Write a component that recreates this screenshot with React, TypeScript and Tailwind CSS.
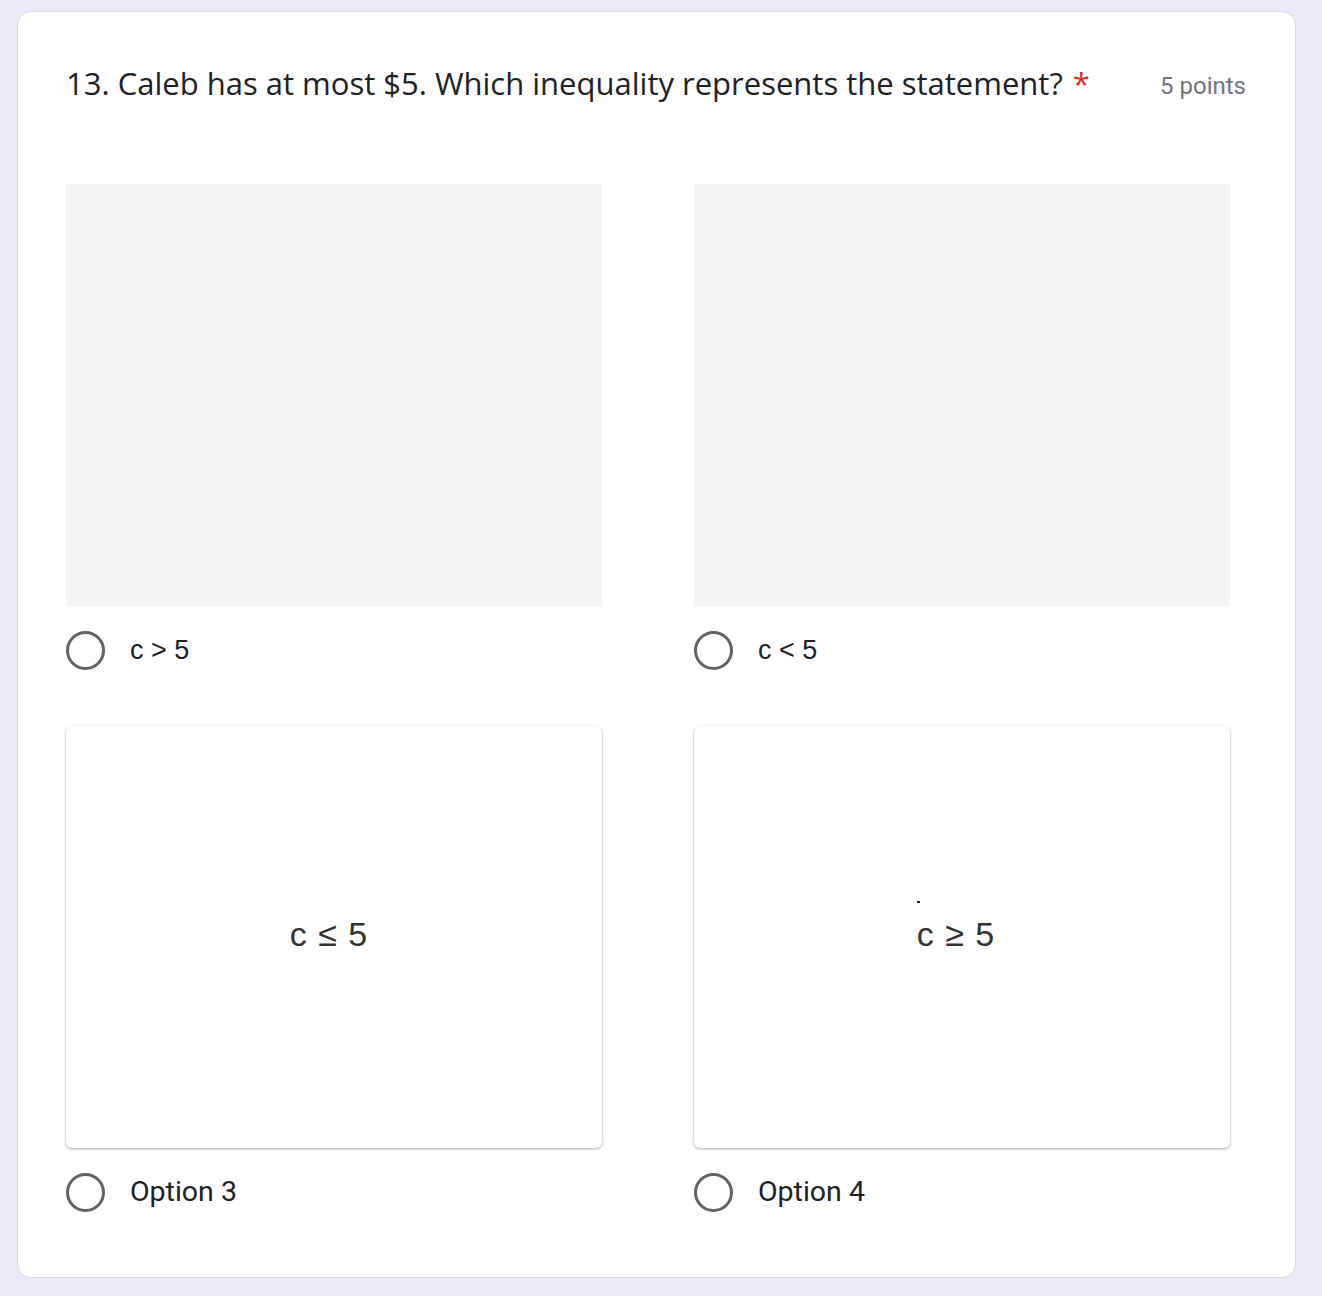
import React from "react";

function Radio() {
  return <div className="w-[39px] h-[39px] rounded-full border-[3px] border-[#5f6368] shrink-0" />;
}

function Option({ label, children, plain }: { label: string; children?: React.ReactNode; plain?: boolean }) {
  return (
    <div className="flex flex-col">
      {plain ? (
        <div className="h-[422px] bg-[#f4f4f4]" />
      ) : (
        <div className="h-[422px] bg-white rounded-[6px] shadow-[0_1px_3px_rgba(0,0,0,0.35)] flex items-center justify-center relative">
          {children}
        </div>
      )}
      <div className="flex items-center mt-[25px] h-[39px]">
        <Radio />
        <span
          className={plain ? "ml-[25px] text-[27px] text-[#202124]" : "ml-[25px] text-[28.5px] text-[#202124]"}
          style={{ fontFamily: plain ? "'Liberation Sans', Arial, sans-serif" : "Roboto, sans-serif" }}
        >
          {label}
        </span>
      </div>
    </div>
  );
}

function MathText({ sym }: { sym: string }) {
  return (
    <span
      className="text-[34px] text-[#333] tracking-[1px]"
      style={{ fontFamily: "'Liberation Sans', Arial, sans-serif" }}
    >
      c {sym} 5
    </span>
  );
}

export default function App() {
  return (
    <div className="min-h-[1296px] bg-[#ede9f7] pt-[11px] pl-[17px]">
      <div className="w-[1279px] h-[1267px] bg-white border border-[#dadce0] rounded-[14px] pl-[48px] pr-[49px] pt-[51px]">
        <div className="flex items-start justify-between">
          <div
            className="text-[31px] leading-[40px] text-[#202124]"
            style={{ fontFamily: "'Open Sans', sans-serif" }}
          >
            13. Caleb has at most $5. Which inequality represents the statement?
            <span className="text-[#d93025] ml-[10px]">*</span>
          </div>
          <div
            className="text-[24px] leading-[40px] text-[#70757a] mt-[3px]"
            style={{ fontFamily: "Roboto, sans-serif" }}
          >
            5 points
          </div>
        </div>
        <div className="grid grid-cols-[536px_536px] gap-x-[92px] gap-y-[56px] mt-[78px]">
          <Option label="c > 5" plain />
          <Option label="c < 5" plain />
          <Option label="Option 3">
            <div className="-ml-[10px] -mt-[6px]">
              <MathText sym="≤" />
            </div>
          </Option>
          <Option label="Option 4">
            <div className="-ml-[12px] -mt-[6px] relative">
              <span className="absolute left-[0px] -top-[8px] w-[3px] h-[2px] bg-[#222]" />
              <MathText sym="≥" />
            </div>
          </Option>
        </div>
      </div>
    </div>
  );
}
